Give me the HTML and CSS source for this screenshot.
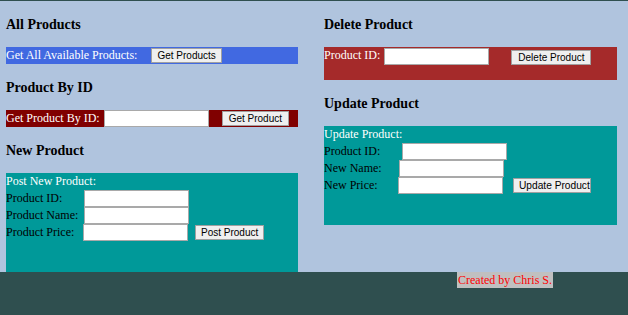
FILE: index.html
```html
<!DOCTYPE html>
<html lang="en">
<head>
    <meta charset="UTF-8">
    <title>Products</title>
    <link rel="stylesheet" href="styles.css">
</head>
<body>
    <div class="topline"></div>
    <div class="page">
        <div class="column">
            <h3>All Products</h3>
            <div class="bar blue">
                <span class="bar-label">Get All Available Products:</span>
                <button class="btn-products">Get Products</button>
            </div>

            <h3>Product By ID</h3>
            <div class="bar maroon">
                <span class="bar-label">Get Product By ID:</span>
                <input type="text" class="field">
                <button class="btn-product">Get Product</button>
            </div>

            <h3>New Product</h3>
            <div class="panel">
                <div class="panel-title">Post New Product:</div>
                <div class="row"><span class="lbl post">Product ID:</span><input type="text" class="field"></div>
                <div class="row"><span class="lbl post">Product Name:</span><input type="text" class="field"></div>
                <div class="row"><span class="lbl post price">Product Price:</span><input type="text" class="field"><button class="btn-post">Post Product</button></div>
            </div>
        </div>

        <div class="column">
            <h3>Delete Product</h3>
            <div class="bar brown">
                <span class="bar-label">Product ID:</span>
                <input type="text" class="field">
                <button class="btn-delete">Delete Product</button>
            </div>

            <h3>Update Product</h3>
            <div class="panel">
                <div class="panel-title">Update Product:</div>
                <div class="row"><span class="lbl update id">Product ID:</span><input type="text" class="field"></div>
                <div class="row"><span class="lbl update name">New Name:</span><input type="text" class="field"></div>
                <div class="row"><span class="lbl update">New Price:</span><input type="text" class="field"><button class="btn-update">Update Product</button></div>
            </div>
        </div>
    </div>

    <footer class="footer">
        <span class="credit">Created by Chris S.</span>
    </footer>
</body>
</html>
```

FILE: styles.css
```css
body {
    margin: 0;
    background-color: #b0c4de;
    font-family: "Liberation Serif", "Times New Roman", serif;
    font-size: 12px;
}

.topline {
    height: 1px;
    background-color: #2f4f4f;
}

.page {
    display: grid;
    grid-template-columns: 292px 293px;
    column-gap: 26px;
    padding: 0 6px;
}

h3 {
    font-size: 14px;
    line-height: 16px;
    margin: 16px 0 14px;
    color: #000;
}

.bar {
    display: flex;
    align-items: center;
    height: 17px;
    color: white;
}

.blue { background-color: #4169e1; }
.maroon { background-color: #800000; }

.brown {
    background-color: #a52a2a;
    height: 33px;
    align-items: flex-start;
    padding-top: 1px;
    box-sizing: border-box;
}

.field {
    box-sizing: border-box;
    width: 105px;
    height: 17px;
    margin: 0;
    padding: 0 2px;
    border: 1px solid #a9a9a9;
    background: white;
}

button {
    box-sizing: border-box;
    height: 15px;
    margin: 0;
    padding: 0 6px;
    font-family: "Liberation Sans", Arial, sans-serif;
    font-size: 10px;
    line-height: 13px;
    color: #000;
    background-color: #efefef;
    border: 1px solid #a0a0a0;
    border-radius: 0;
    white-space: nowrap;
}

.btn-products {
    margin-left: 14px;
    padding: 0 5px;
}

.maroon .field { margin-left: 4px; }
.btn-product { margin-left: 13px; }

.brown .field { margin-left: 4px; }
.btn-delete {
    margin-left: 22px;
    margin-top: 2px;
}

.panel {
    height: 99px;
    background-color: #009999;
}

.panel-title {
    height: 17px;
    line-height: 17px;
    color: white;
}

.row {
    display: flex;
    align-items: center;
    height: 17px;
}

.lbl {
    display: inline-block;
}

.lbl.post { width: 78px; }
.lbl.post.price { width: 77px; }
.lbl.update { width: 74px; }
.lbl.update.id { width: 78px; }
.lbl.update.name { width: 75px; }

.btn-post {
    margin-left: 7px;
    padding: 0 5px;
}

.btn-update {
    width: 78px;
    margin-left: 10px;
    text-align: left;
    padding: 0 0 0 5px;
    font-size: 10.2px;
}

.footer {
    height: 43px;
    background-color: #2f4f4f;
}

.credit {
    display: inline-block;
    margin-left: 457px;
    height: 16px;
    line-height: 16px;
    padding: 0 1px;
    background-color: #c0c0c0;
    color: red;
}
```
